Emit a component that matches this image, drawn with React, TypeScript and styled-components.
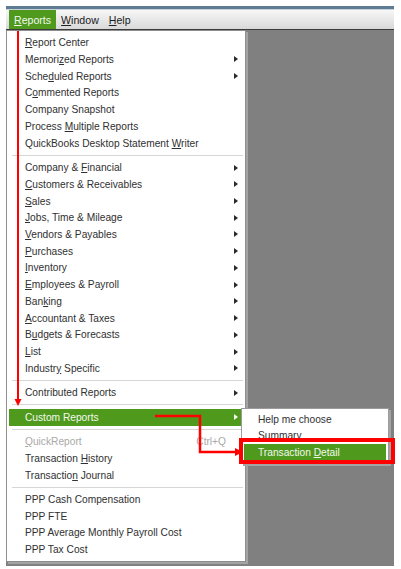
import React from "react";
import styled, { createGlobalStyle } from "styled-components";

const GREEN = "#4f9a1d";
const ROW_H = 16.74;

const GlobalStyle = createGlobalStyle`
  html, body { margin: 0; padding: 0; background: #ffffff; }
  body { font-family: "Liberation Sans", Arial, sans-serif; }
  #root { width: 401px; height: 569px; overflow: hidden; }
`;

const Window = styled.div`
  position: relative;
  margin: 6px 7px 0 6px;
  height: 560px;
  display: flex;
  flex-direction: column;
`;

const TitleStrip = styled.div`
  height: 3px;
  background: #5e7c93;
`;

const MenuBar = styled.div`
  box-sizing: border-box;
  height: 21px;
  border-top: 1px solid #c9d1d8;
  border-bottom: 1px solid #3c3c3c;
  background: linear-gradient(#f7f7f7, #d9d9d9);
  display: flex;
  padding-left: 3px;
`;

const MenuTitle = styled.div<{ $open?: boolean }>`
  display: flex;
  align-items: center;
  padding: 1px 5px 0;
  font-size: 10.6px;
  color: ${(p) => (p.$open ? "#f4f8f0" : "#202020")};
  background: ${(p) => (p.$open ? GREEN : "transparent")};
`;

const Workspace = styled.div`
  position: relative;
  flex: 1;
  background: #808080;
`;

const Dropdown = styled.div`
  position: absolute;
  left: 0;
  top: 0;
  width: 240px;
  box-sizing: border-box;
  border: 1px solid #8e8e8e;
  background: #ffffff;
  padding: 3.4px 2px 2.8px;
  box-shadow: 2px 2px 0 #a3a3a3;
`;

const SubMenu = styled.div`
  position: absolute;
  left: 235px;
  top: 378px;
  width: 148px;
  box-sizing: border-box;
  border: 1px solid #9b9b9b;
  background: #ffffff;
  padding: 1.8px 2px 1.8px;
  box-shadow: 2px 2px 0 #a3a3a3;
`;

const Row = styled.div<{ $active?: boolean; $disabled?: boolean; $indent?: number }>`
  height: ${ROW_H}px;
  display: flex;
  align-items: center;
  padding: 0 4px 0 ${(p) => p.$indent ?? 16}px;
  font-size: 10.2px;
  white-space: nowrap;
  color: ${(p) => (p.$active ? "#f3f8ee" : p.$disabled ? "#a9a9a9" : "#303030")};
  background: ${(p) => (p.$active ? GREEN : "transparent")};
`;

const Key = styled.span`
  text-decoration: underline;
  text-underline-offset: 1px;
`;

const Shortcut = styled.span`
  margin-left: auto;
  margin-right: 13px;
`;

const Arrow = styled.span<{ $light?: boolean }>`
  margin-left: auto;
  margin-right: 1px;
  width: 0;
  height: 0;
  border-left: 4px solid ${(p) => (p.$light ? "#f3f8ee" : "#2a2a2a")};
  border-top: 3px solid transparent;
  border-bottom: 3px solid transparent;
`;

const Separator = styled.div`
  height: 1px;
  margin: 3.33px 0 3.33px 3px;
  background: #d6d6d6;
`;

const Annotations = styled.svg`
  position: absolute;
  left: -6px;
  top: -6px;
  width: 401px;
  height: 569px;
  overflow: visible;
  pointer-events: none;
`;

type Entry =
  | "sep"
  | { label: string; sub?: boolean; shortcut?: string; disabled?: boolean; active?: boolean };

// "_" marks the mnemonic letter of a label
const reportsMenu: Entry[] = [
  { label: "_Report Center" },
  { label: "Memori_zed Reports", sub: true },
  { label: "Sche_duled Reports", sub: true },
  { label: "C_ommented Reports" },
  { label: "Company Snapshot" },
  { label: "Process _Multiple Reports" },
  { label: "QuickBooks Desktop Statement _Writer" },
  "sep",
  { label: "Company & _Financial", sub: true },
  { label: "_Customers & Receivables", sub: true },
  { label: "_Sales", sub: true },
  { label: "_Jobs, Time & Mileage", sub: true },
  { label: "_Vendors & Payables", sub: true },
  { label: "_Purchases", sub: true },
  { label: "_Inventory", sub: true },
  { label: "_Employees & Payroll", sub: true },
  { label: "Ban_king", sub: true },
  { label: "_Accountant & Taxes", sub: true },
  { label: "B_udgets & Forecasts", sub: true },
  { label: "_List", sub: true },
  { label: "Industr_y Specific", sub: true },
  "sep",
  { label: "Contributed Reports", sub: true },
  "sep",
  { label: "Custom Reports", sub: true, active: true },
  "sep",
  { label: "_QuickReport", shortcut: "Ctrl+Q", disabled: true },
  { label: "Transaction _History" },
  { label: "Transactio_n Journal" },
  "sep",
  { label: "PPP Cash Compensation" },
  { label: "PPP FTE" },
  { label: "PPP Average Monthly Payroll Cost" },
  { label: "PPP Tax Cost" },
];

const customMenu: Entry[] = [
  { label: "Help me choose" },
  { label: "Summary" },
  { label: "Transaction _Detail", active: true },
];

function Label({ text }: { text: string }) {
  const i = text.indexOf("_");
  if (i < 0) return <>{text}</>;
  return (
    <>
      {text.slice(0, i)}
      <Key>{text[i + 1]}</Key>
      {text.slice(i + 2)}
    </>
  );
}

function MenuItems({ entries, indent }: { entries: Entry[]; indent?: number }) {
  return (
    <>
      {entries.map((e, i) =>
        e === "sep" ? (
          <Separator key={i} />
        ) : (
          <Row key={i} $active={e.active} $disabled={e.disabled} $indent={indent}>
            <span>
              <Label text={e.label} />
            </span>
            {e.shortcut && <Shortcut>{e.shortcut}</Shortcut>}
            {e.sub && <Arrow $light={e.active} />}
          </Row>
        )
      )}
    </>
  );
}

export default function App() {
  return (
    <>
      <GlobalStyle />
      <Window>
        <TitleStrip />
        <MenuBar>
          <MenuTitle $open>
            <span>
              <Key>R</Key>eports
            </span>
          </MenuTitle>
          <MenuTitle>
            <span>
              <Key>W</Key>indow
            </span>
          </MenuTitle>
          <MenuTitle>
            <span>
              <Key>H</Key>elp
            </span>
          </MenuTitle>
        </MenuBar>
        <Workspace>
          <Dropdown>
            <MenuItems entries={reportsMenu} />
          </Dropdown>
          <SubMenu>
            <MenuItems entries={customMenu} indent={14} />
          </SubMenu>
        </Workspace>
        <Annotations viewBox="0 0 401 569">
          <path d="M18 31 V399" stroke="#ff0000" strokeWidth="2" fill="none" />
          <polygon points="14.5,399 21.5,399 18,406" fill="#ff0000" />
          <path d="M155 416 H200 V452 H236" stroke="#ff0000" strokeWidth="2.5" fill="none" />
          <polygon points="235,448 235,456 243,452" fill="#ff0000" />
          <rect x="241" y="440" width="152" height="22" stroke="#ff0000" strokeWidth="4" fill="none" />
        </Annotations>
      </Window>
    </>
  );
}
